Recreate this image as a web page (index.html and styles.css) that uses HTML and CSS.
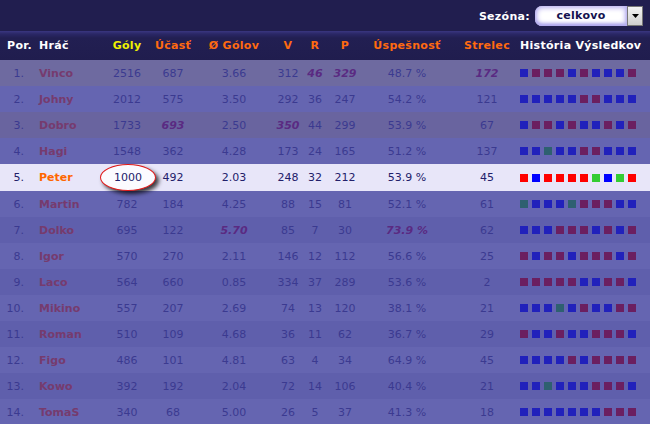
FILE: index.html
```html
<!DOCTYPE html>
<html lang="sk">
<head>
<meta charset="utf-8">
<title>Štatistiky</title>
<link rel="stylesheet" href="styles.css">
</head>
<body>
<div class="page">
  <div class="topbar">
    <span class="season-label">Sezóna:</span>
    <div class="select">
      <span class="select-value">celkovo</span>
      <span class="select-btn"><svg width="7" height="4" viewBox="0 0 7 4"><path d="M0 0h7L3.5 4z" fill="#000"/></svg></span>
    </div>
  </div>
  <table class="stats">
    <colgroup>
      <col class="c-por"><col class="c-name"><col class="c-goly"><col class="c-ucast"><col class="c-avg"><col class="c-v"><col class="c-r"><col class="c-p"><col class="c-usp"><col class="c-str"><col class="c-hist">
    </colgroup>
    <thead>
      <tr>
        <th class="h-por">Por.</th><th class="h-name">Hráč</th><th class="yellow">Góly</th><th class="orange">Účasť</th><th class="orange">Ø Gólov</th><th class="orange">V</th><th class="orange">R</th><th class="orange">P</th><th class="orange">Úspešnosť</th><th class="orange">Strelec</th><th class="h-hist">História Výsledkov</th>
      </tr>
    </thead>
    <tbody>
      <tr class="r-gold"><td class="por">1.</td><td class="name">Vinco</td><td>2516</td><td>687</td><td>3.66</td><td>312</td><td class="hi">46</td><td class="hi">329</td><td>48.7 %</td><td class="hi">172</td><td class="hist"><i class="b"></i><i class="m"></i><i class="m"></i><i class="m"></i><i class="b"></i><i class="m"></i><i class="b"></i><i class="b"></i><i class="b"></i><i class="m"></i></td></tr>
      <tr class="r-even"><td class="por">2.</td><td class="name">Johny</td><td>2012</td><td>575</td><td>3.50</td><td>292</td><td>36</td><td>247</td><td>54.2 %</td><td>121</td><td class="hist"><i class="b"></i><i class="b"></i><i class="b"></i><i class="b"></i><i class="b"></i><i class="m"></i><i class="m"></i><i class="b"></i><i class="b"></i><i class="b"></i></td></tr>
      <tr class="r-bronze"><td class="por">3.</td><td class="name">Dobro</td><td>1733</td><td class="hi">693</td><td>2.50</td><td class="hi">350</td><td>44</td><td>299</td><td>53.9 %</td><td>67</td><td class="hist"><i class="b"></i><i class="m"></i><i class="m"></i><i class="b"></i><i class="m"></i><i class="b"></i><i class="b"></i><i class="m"></i><i class="b"></i><i class="m"></i></td></tr>
      <tr class="r-even"><td class="por">4.</td><td class="name">Hagi</td><td>1548</td><td>362</td><td>4.28</td><td>173</td><td>24</td><td>165</td><td>51.2 %</td><td>137</td><td class="hist"><i class="b"></i><i class="b"></i><i class="t"></i><i class="b"></i><i class="b"></i><i class="m"></i><i class="m"></i><i class="b"></i><i class="b"></i><i class="b"></i></td></tr>
      <tr class="r-me"><td class="por">5.</td><td class="name">Peter</td><td><span class="oval">1000</span></td><td>492</td><td>2.03</td><td>248</td><td>32</td><td>212</td><td>53.9 %</td><td>45</td><td class="hist"><i class="red"></i><i class="blue"></i><i class="red"></i><i class="red"></i><i class="red"></i><i class="red"></i><i class="green"></i><i class="blue"></i><i class="green"></i><i class="red"></i></td></tr>
      <tr class="r-even"><td class="por">6.</td><td class="name">Martin</td><td>782</td><td>184</td><td>4.25</td><td>88</td><td>15</td><td>81</td><td>52.1 %</td><td>61</td><td class="hist"><i class="t"></i><i class="b"></i><i class="b"></i><i class="b"></i><i class="t"></i><i class="m"></i><i class="m"></i><i class="m"></i><i class="b"></i><i class="b"></i></td></tr>
      <tr class="r-odd"><td class="por">7.</td><td class="name">Dolko</td><td>695</td><td>122</td><td class="hi">5.70</td><td>85</td><td>7</td><td>30</td><td class="hi">73.9 %</td><td>62</td><td class="hist"><i class="b"></i><i class="b"></i><i class="b"></i><i class="m"></i><i class="m"></i><i class="m"></i><i class="b"></i><i class="m"></i><i class="b"></i><i class="m"></i></td></tr>
      <tr class="r-even"><td class="por">8.</td><td class="name">Igor</td><td>570</td><td>270</td><td>2.11</td><td>146</td><td>12</td><td>112</td><td>56.6 %</td><td>25</td><td class="hist"><i class="m"></i><i class="b"></i><i class="m"></i><i class="m"></i><i class="b"></i><i class="m"></i><i class="m"></i><i class="m"></i><i class="b"></i><i class="m"></i></td></tr>
      <tr class="r-odd"><td class="por">9.</td><td class="name">Laco</td><td>564</td><td>660</td><td>0.85</td><td>334</td><td>37</td><td>289</td><td>53.6 %</td><td>2</td><td class="hist"><i class="m"></i><i class="m"></i><i class="m"></i><i class="m"></i><i class="m"></i><i class="b"></i><i class="b"></i><i class="m"></i><i class="m"></i><i class="b"></i></td></tr>
      <tr class="r-even"><td class="por">10.</td><td class="name">Mikino</td><td>557</td><td>207</td><td>2.69</td><td>74</td><td>13</td><td>120</td><td>38.1 %</td><td>21</td><td class="hist"><i class="b"></i><i class="b"></i><i class="b"></i><i class="t"></i><i class="b"></i><i class="m"></i><i class="b"></i><i class="b"></i><i class="m"></i><i class="m"></i></td></tr>
      <tr class="r-odd"><td class="por">11.</td><td class="name">Roman</td><td>510</td><td>109</td><td>4.68</td><td>36</td><td>11</td><td>62</td><td>36.7 %</td><td>29</td><td class="hist"><i class="m"></i><i class="b"></i><i class="b"></i><i class="m"></i><i class="b"></i><i class="b"></i><i class="m"></i><i class="m"></i><i class="m"></i><i class="b"></i></td></tr>
      <tr class="r-even"><td class="por">12.</td><td class="name">Figo</td><td>486</td><td>101</td><td>4.81</td><td>63</td><td>4</td><td>34</td><td>64.9 %</td><td>45</td><td class="hist"><i class="b"></i><i class="b"></i><i class="b"></i><i class="b"></i><i class="m"></i><i class="b"></i><i class="m"></i><i class="m"></i><i class="m"></i><i class="m"></i></td></tr>
      <tr class="r-odd"><td class="por">13.</td><td class="name">Kowo</td><td>392</td><td>192</td><td>2.04</td><td>72</td><td>14</td><td>106</td><td>40.4 %</td><td>21</td><td class="hist"><i class="b"></i><i class="b"></i><i class="t"></i><i class="b"></i><i class="b"></i><i class="b"></i><i class="m"></i><i class="m"></i><i class="m"></i><i class="b"></i></td></tr>
      <tr class="r-even"><td class="por">14.</td><td class="name">TomaS</td><td>340</td><td>68</td><td>5.00</td><td>26</td><td>5</td><td>37</td><td>41.3 %</td><td>18</td><td class="hist"><i class="b"></i><i class="b"></i><i class="b"></i><i class="b"></i><i class="b"></i><i class="b"></i><i class="b"></i><i class="m"></i><i class="m"></i><i class="m"></i></td></tr>
    </tbody>
  </table>
</div>
</body>
</html>
```
FILE: styles.css
```css
html, body {
  margin: 0;
  padding: 0;
  background: #211e4f;
}
body {
  font-family: "DejaVu Sans", Verdana, sans-serif;
  font-size: 11px;
  width: 650px;
  height: 424px;
  overflow: hidden;
}
.topbar {
  height: 31px;
  display: flex;
  align-items: center;
  justify-content: flex-end;
  padding-right: 7px;
  gap: 5px;
  background: #211e4f;
}
.season-label {
  color: #fff;
  font-weight: bold;
  font-size: 11px;
  letter-spacing: 0.3px;
  margin-top: 1px;
}
.select {
  width: 108px;
  height: 20px;
  display: flex;
  box-sizing: border-box;
  margin-top: 1px;
}
.select-value {
  flex: 1;
  background: #fff;
  border-radius: 7px 0 0 7px;
  box-shadow: inset 0 0 5px 2px #b8b0f0, inset 0 -2px 3px #9c94e8;
  color: #141250;
  font-weight: bold;
  font-size: 11px;
  letter-spacing: 0.3px;
  text-align: center;
  line-height: 20px;
}
.select-btn {
  width: 16px;
  box-sizing: border-box;
  background: linear-gradient(#f4f4f4, #cfcfcf);
  border: 1px solid #777;
  display: flex;
  align-items: center;
  justify-content: center;
}
.stats {
  width: 650px;
  border-collapse: collapse;
  table-layout: fixed;
  border-spacing: 0;
}
.c-por { width: 34px; }
.c-name { width: 66px; }
.c-goly { width: 54px; }
.c-ucast { width: 38px; }
.c-avg { width: 84px; }
.c-v { width: 24px; }
.c-r { width: 30px; }
.c-p { width: 30px; }
.c-usp { width: 94px; }
.c-str { width: 66px; }
.c-hist { width: 130px; }

.stats thead tr {
  height: 29px;
  background: linear-gradient(#3a3680 0px, #2a2766 3px, #221f52 7px, #201d4e 100%);
}
.stats th {
  font-weight: bold;
  font-size: 11px;
  letter-spacing: 0.3px;
  padding: 0;
  text-align: center;
  white-space: nowrap;
  color: #fff;
}
.stats th.h-por { padding-left: 5px; }
.stats th.h-name { text-align: left; padding-left: 5px; }
.stats th.h-hist { text-align: left; }
.stats th.yellow { color: #f0f000; }
.stats th.orange { color: #ff6a10; }

.stats tbody tr { height: 26px; }
.stats td {
  padding: 0;
  text-align: center;
  white-space: nowrap;
  color: #3b3a90;
  overflow: visible;
}
.stats td.por {
  text-align: right;
  padding-right: 10px;
}
.stats td.name {
  text-align: left;
  padding-left: 5px;
  font-weight: bold;
  color: #763b6e;
}
.stats td.hi {
  font-weight: bold;
  font-style: italic;
  color: #5a2a82;
}
.r-gold { background: #6e6aa0; }
.r-bronze { background: #69649f; }
.r-even { background: #6565b1; }
.r-odd { background: #5f5fac; }
.r-me { background: #e8e6f9; }
.r-me td { color: #22206a; }
.r-me td.name { color: #ff6600; }

.oval {
  display: inline-block;
  box-sizing: border-box;
  width: 56px;
  height: 27px;
  line-height: 25px;
  border: 1px solid #e01818;
  border-radius: 50%;
  background: #fbfbff;
  box-shadow: 3px 3px 4px rgba(0, 0, 0, 0.75);
  vertical-align: middle;
  color: #22206a;
}

.stats td.hist {
  text-align: left;
  font-size: 0;
  line-height: 0;
}
.hist i {
  display: inline-block;
  width: 8px;
  height: 8px;
  margin-right: 4px;
  vertical-align: middle;
}
.hist .b { background: #2121bb; }
.hist .m { background: #6b1f60; }
.hist .t { background: #2e6070; }
.hist .red { background: #ff0000; }
.hist .blue { background: #0000ff; }
.hist .green { background: #33cc33; }
```
